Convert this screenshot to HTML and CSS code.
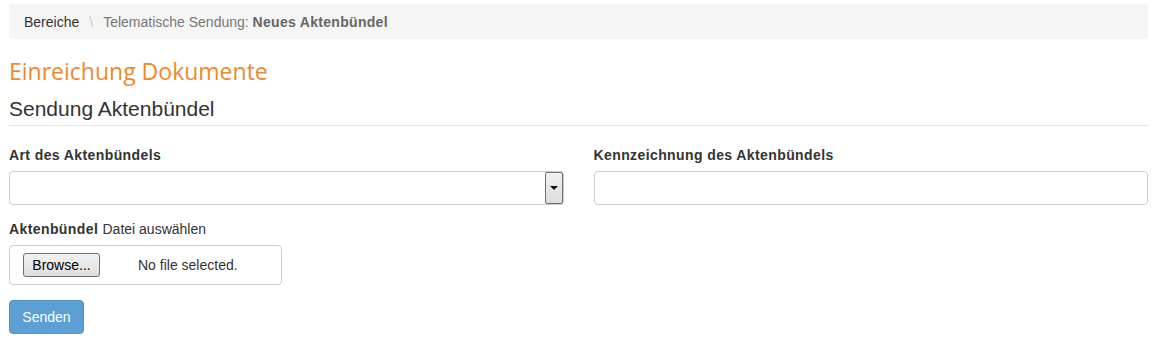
FILE: index.html
```html
<!DOCTYPE html>
<html lang="de">
<head>
<meta charset="utf-8">
<title>Einreichung Dokumente</title>
<link rel="stylesheet" href="styles.css">
</head>
<body>
<div class="page">
  <ol class="breadcrumb">
    <li class="crumb-link">Bereiche</li>
    <li class="crumb-sep">\</li>
    <li class="crumb-active">Telematische Sendung: <b>Neues Aktenbündel</b></li>
  </ol>
  <h1 class="title">Einreichung Dokumente</h1>
  <h2 class="subtitle">Sendung Aktenbündel</h2>
  <div class="row">
    <div class="col">
      <label class="label">Art des Aktenbündels</label>
      <div class="select">
        <div class="select-value"></div>
        <div class="select-arrow"><span class="tri"></span></div>
      </div>
    </div>
    <div class="col">
      <label class="label">Kennzeichnung des Aktenbündels</label>
      <div class="input"></div>
    </div>
  </div>
  <div class="file-group">
    <div class="label"><b>Aktenbündel</b> <span class="normal">Datei auswählen</span></div>
    <div class="file-box">
      <span class="browse">Browse...</span>
      <span class="nofile">No file selected.</span>
    </div>
  </div>
  <button class="btn">Senden</button>
</div>
</body>
</html>
```
FILE: styles.css
```css
* { box-sizing: border-box; }
html, body { margin: 0; padding: 0; background: #fff; }
body { font-family: "Liberation Sans", Arial, sans-serif; font-size: 14px; color: #333; }
.page { padding: 4px 4px 0 9px; }
.breadcrumb {
  list-style: none; margin: 0; padding: 0 15px;
  height: 35px; background: #f5f5f5; border-radius: 4px;
  display: flex; align-items: center; gap: 10px;
  font-size: 14px;
}
.crumb-link { color: #333; }
.crumb-sep { color: #ccc; }
.crumb-active { color: #777; }
.crumb-active b { color: #666; letter-spacing: 0.3px; }
.title {
  margin: 19px 0 0; font-family: "Open Sans", sans-serif; font-weight: 400;
  font-size: 23px; line-height: 26px; color: #f0892d;
}
.subtitle {
  margin: 14px 0 0; font-weight: 400; font-size: 21px; line-height: 22px; color: #333;
  padding-bottom: 5px; border-bottom: 1px solid #e5e5e5;
}
.row { display: flex; gap: 30px; margin-top: 22px; }
.col { flex: 1; display: flex; flex-direction: column; }
.label { display: block; font-weight: bold; font-size: 14px; line-height: 15px; color: #333; margin-bottom: 8px; letter-spacing: 0.4px; }
.label .normal { font-weight: normal; letter-spacing: 0; }
.select {
  height: 34px; border: 1px solid #ccc; border-radius: 4px; display: flex; background: #fff;
}
.select-value { flex: 1; }
.select-arrow {
  width: 18px; border: 1px solid #707070; border-radius: 2px;
  background: linear-gradient(#f2f2f2, #dcdcdc);
  display: flex; align-items: center; justify-content: center;
}
.tri { width: 0; height: 0; border-left: 4px solid transparent; border-right: 4px solid transparent; border-top: 4px solid #111; }
.input { height: 34px; border: 1px solid #ccc; border-radius: 4px; background: #fff; }
.file-group { margin-top: 17px; }
.file-box {
  width: 273px; height: 40px; border: 1px solid #ccc; border-radius: 4px;
  display: flex; align-items: center; padding-left: 13px;
}
.browse {
  width: 77px; height: 24px; border: 1px solid #707070; border-radius: 3px;
  background: linear-gradient(#f2f2f2, #dddddd);
  display: flex; align-items: center; justify-content: center;
  font-size: 14px; color: #000;
}
.nofile { margin-left: 38px; font-size: 14px; color: #333; }
.btn {
  display: block; margin-top: 15px; width: 75px; height: 34px;
  background: #5b9fd4; border: 1px solid #4f93c9; border-radius: 4px;
  color: #fff; font-family: "Liberation Sans", Arial, sans-serif; font-size: 14px; padding: 0;
}
```
